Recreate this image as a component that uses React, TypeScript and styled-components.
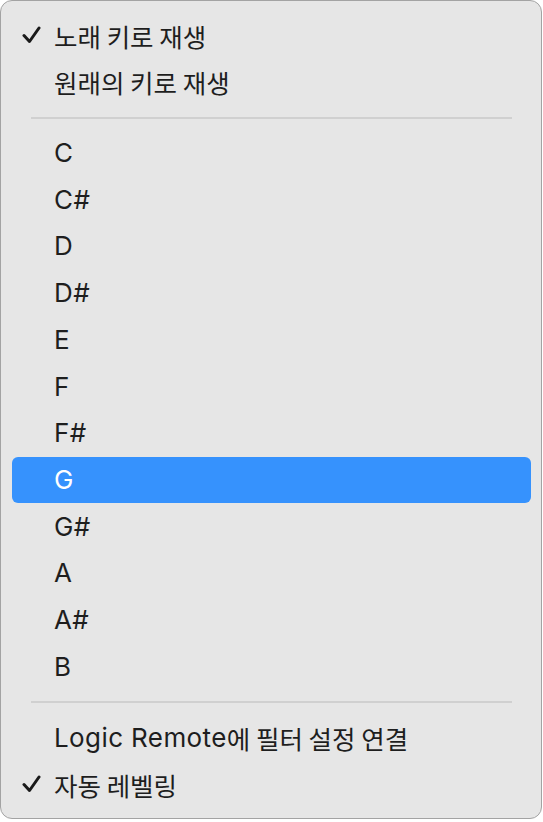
import React from "react";
import styled, { createGlobalStyle } from "styled-components";

const Global = createGlobalStyle`
  html, body { margin: 0; padding: 0; background: #ffffff; }
  body { font-family: Inter, "Noto Sans CJK KR", sans-serif; }
`;

const Menu = styled.div`
  box-sizing: border-box;
  width: 542px;
  height: 819px;
  background: #e6e6e6;
  border: 1px solid #a3a3a3;
  border-radius: 12px;
  padding: 11px 10px 9px 11px;
  display: flex;
  flex-direction: column;
  font-family: Inter, "Noto Sans CJK KR", sans-serif;
`;

const Row = styled.div<{ $active?: boolean }>`
  position: relative;
  height: 46.7px;
  flex: none;
  display: flex;
  align-items: center;
  padding-left: 42px;
  border-radius: 6px;
  font-size: 26px;
  line-height: 1;
  white-space: pre;
  letter-spacing: 0.4px;
  color: ${(p) => (p.$active ? "#ffffff" : "#1e1e1e")};
  background: ${(p) => (p.$active ? "#3692fd" : "transparent")};
`;

const Hangul = styled.span`
  font-family: "Noto Sans CJK KR", sans-serif;
  font-size: 25.5px;
  letter-spacing: 0;
`;

const Check = styled.svg`
  position: absolute;
  left: 10px;
  top: 50%;
  transform: translateY(-50%);
  width: 19px;
  height: 18px;
`;

const Separator = styled.div`
  flex: none;
  height: 24.4px;
  display: flex;
  align-items: center;
  padding: 0 19px;
  &::after {
    content: "";
    flex: 1;
    height: 2px;
    background: #d0d0d0;
  }
`;

const CheckMark = () => (
  <Check viewBox="0 0 19 18">
    <polyline
      points="2,9.5 7.5,15.5 17,2"
      fill="none"
      stroke="#1a1a1a"
      strokeWidth="3"
      strokeLinecap="round"
      strokeLinejoin="round"
    />
  </Check>
);

type Item = { label: string; checked?: boolean; active?: boolean };

const top: Item[] = [
  { label: "노래 키로 재생", checked: true },
  { label: "원래의 키로 재생" },
];

const keys: Item[] = ["C", "C#", "D", "D#", "E", "F", "F#", "G", "G#", "A", "A#", "B"].map(
  (k) => ({ label: k, active: k === "G" })
);

const bottom: Item[] = [
  { label: "Logic Remote에 필터 설정 연결" },
  { label: "자동 레벨링", checked: true },
];

const splitScripts = (text: string) =>
  text
    .split(/([\uAC00-\uD7A3]+(?:\s+[\uAC00-\uD7A3]+)*)/)
    .filter((s) => s.length > 0)
    .map((s, i) =>
      /[\uAC00-\uD7A3]/.test(s) ? <Hangul key={i}>{s}</Hangul> : <span key={i}>{s}</span>
    );

const renderItems = (items: Item[]) =>
  items.map((it) => (
    <Row key={it.label} $active={it.active}>
      {it.checked && <CheckMark />}
      {splitScripts(it.label)}
    </Row>
  ));

export default function App() {
  return (
    <>
      <Global />
      <Menu>
        {renderItems(top)}
        <Separator />
        {renderItems(keys)}
        <Separator />
        {renderItems(bottom)}
      </Menu>
    </>
  );
}
